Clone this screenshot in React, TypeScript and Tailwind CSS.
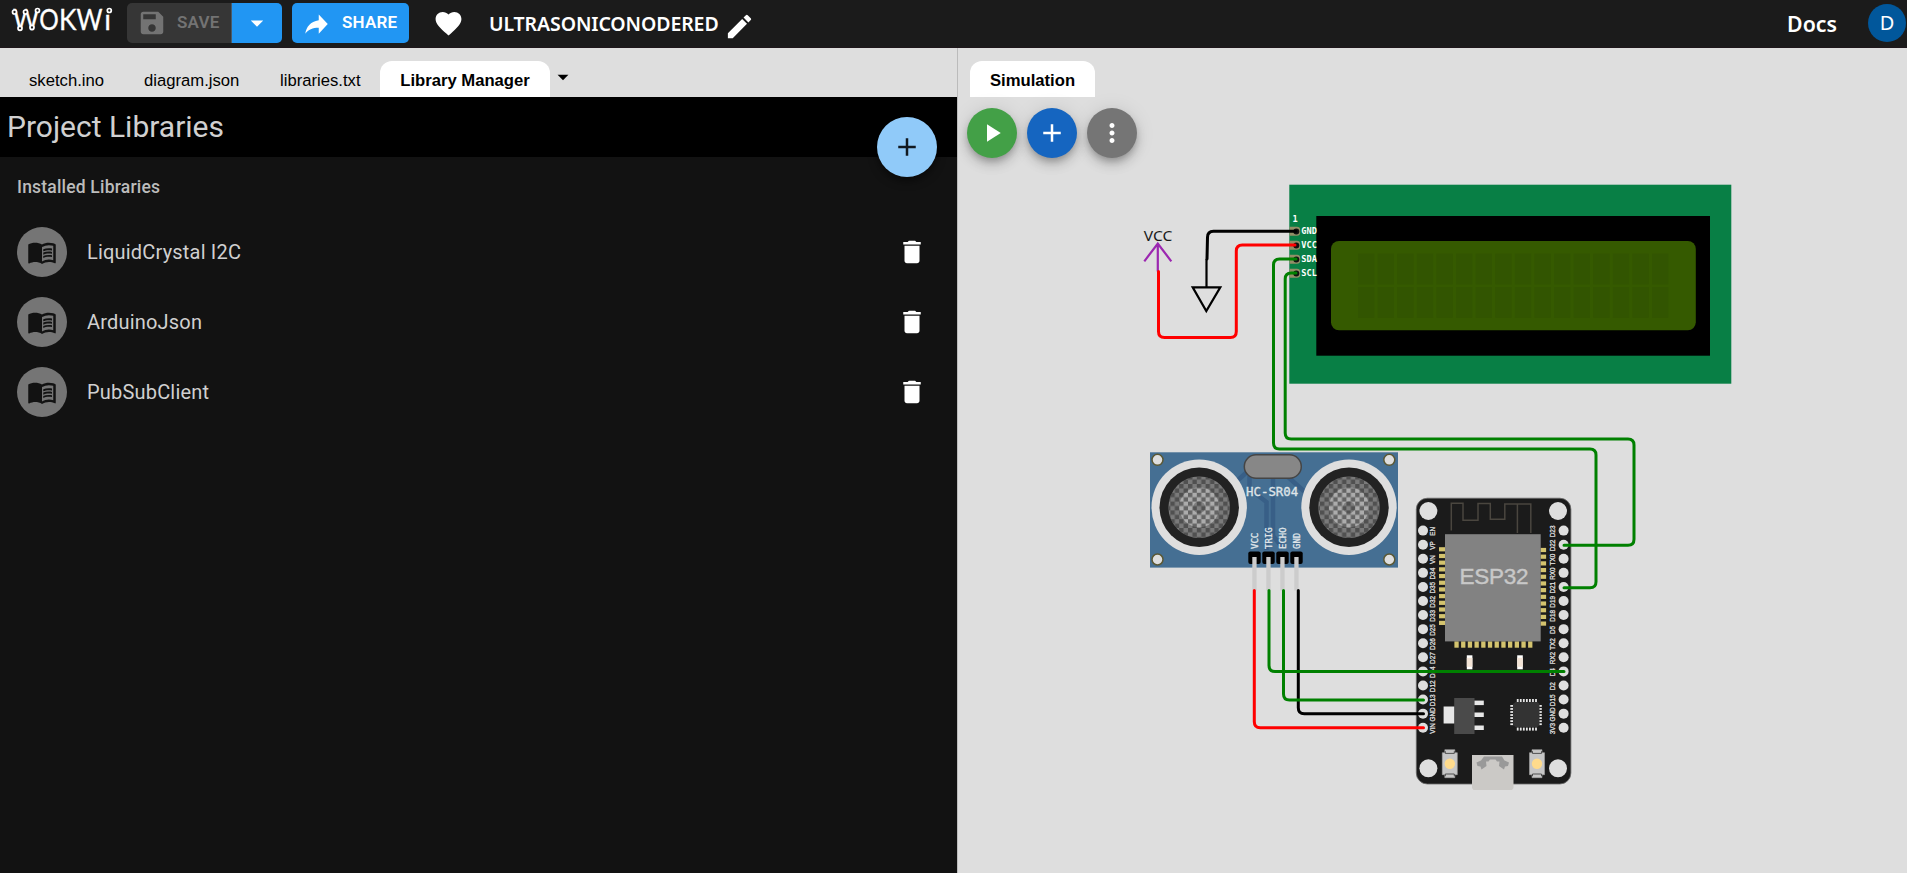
import React from "react";

const ICONS = {
  save: "M17 3H5c-1.11 0-2 .9-2 2v14c0 1.1.89 2 2 2h14c1.1 0 2-.9 2-2V7l-4-4zm-5 16c-1.66 0-3-1.34-3-3s1.34-3 3-3 3 1.34 3 3-1.34 3-3 3zm3-10H5V5h10v4z",
  share: "M14 4v5C6.5 10 3 15 2 21c2.8-3.6 6.5-5.2 12-5.2V21l8-8.5z",
  heart: "M12 21.35l-1.45-1.32C5.4 15.36 2 12.28 2 8.5 2 5.42 4.42 3 7.5 3c1.74 0 3.41.81 4.5 2.09C13.09 3.81 14.76 3 16.5 3 19.58 3 22 5.42 22 8.5c0 3.78-3.4 6.86-8.55 11.54L12 21.35z",
  edit: "M3 17.25V21h3.75L17.81 9.94l-3.75-3.75L3 17.25zM20.71 7.04c.39-.39.39-1.02 0-1.41l-2.34-2.34a.9959.9959 0 0 0-1.41 0l-1.83 1.83 3.75 3.75 1.83-1.83z",
  caret: "M7 10l5 5 5-5z",
  add: "M19 13h-6v6h-2v-6H5v-2h6V5h2v6h6v2z",
  play: "M8 5v14l11-7z",
  more: "M12 8c1.1 0 2-.9 2-2s-.9-2-2-2-2 .9-2 2 .9 2 2 2zm0 2c-1.1 0-2 .9-2 2s.9 2 2 2 2-.9 2-2-.9-2-2-2zm0 6c-1.1 0-2 .9-2 2s.9 2 2 2 2-.9 2-2-.9-2-2-2z",
  trash: "M6 19c0 1.1.9 2 2 2h8c1.1 0 2-.9 2-2V7H6v12zM19 4h-3.5l-1-1h-5l-1 1H5v2h14V4z",
  book: "M21 5c-1.11-.35-2.33-.5-3.5-.5-1.95 0-4.05.4-5.5 1.5-1.45-1.1-3.55-1.5-5.5-1.5S2.45 4.9 1 6v14.65c0 .25.25.5.5.5.1 0 .15-.05.25-.05C3.1 20.45 5.05 20 6.5 20c1.95 0 4.05.4 5.5 1.5 1.35-.85 3.8-1.5 5.5-1.5 1.65 0 3.35.3 4.75 1.05.1.05.15.05.25.05.25 0 .5-.25.5-.5V6c-.6-.45-1.25-.75-2-1zm0 13.5c-1.1-.35-2.3-.5-3.5-.5-1.7 0-4.15.65-5.5 1.5V8c1.35-.85 3.8-1.5 5.5-1.5 1.2 0 2.4.15 3.5.5v11.5z",
  lines:
    "M17.5 10.5c.88 0 1.73.09 2.5.26V9.24c-.79-.15-1.64-.24-2.5-.24-1.7 0-3.24.29-4.5.83v1.66c1.13-.64 2.7-.99 4.5-.99zM13 12.49v1.66c1.13-.64 2.7-.99 4.5-.99.88 0 1.73.09 2.5.26V11.9c-.79-.15-1.64-.24-2.5-.24-1.7 0-3.24.3-4.5.83zM17.5 14.33c-1.7 0-3.24.29-4.5.83v1.66c1.13-.64 2.7-.99 4.5-.99.88 0 1.73.09 2.5.26v-1.52c-.79-.16-1.64-.24-2.5-.24z",
};

function Icon({ d, className }: { d: string; className: string }) {
  return (
    <svg viewBox="0 0 24 24" fill="currentColor" className={`shrink-0 ${className}`}>
      <path d={d} />
    </svg>
  );
}

function Logo() {
  const nodes = [
    [14.5, 13],
    [20, 29.3],
    [25.5, 13],
    [32, 28.5],
    [37.5, 11.5],
    [109.3, 11.5],
  ];
  return (
    <svg viewBox="0 0 120 48" className="h-12 w-[120px] shrink-0">
      <g fill="#fff" stroke="#fff" strokeWidth="0.3" fontFamily="Lato, sans-serif" fontSize="28">
        <text x="13" y="30.7" textLength="26" lengthAdjust="spacingAndGlyphs">W</text>
        <text x="39.3" y="30.7" textLength="19.5" lengthAdjust="spacingAndGlyphs">O</text>
        <text x="59" y="30.7" textLength="17.5" lengthAdjust="spacingAndGlyphs">K</text>
        <text x="76.5" y="30.7" textLength="26" lengthAdjust="spacingAndGlyphs">W</text>
        <text x="104.3" y="30.7">ı</text>
      </g>
      {nodes.map(([x, y]) => (
        <circle key={x} cx={x} cy={y} r="2" fill="#1b1b1b" stroke="#fff" strokeWidth="1.7" />
      ))}
    </svg>
  );
}

function Header() {
  return (
    <header className="flex h-12 shrink-0 items-center border-b border-[#1f171b] bg-[#1b1b1b] pb-px text-white">
      <Logo />
      <div className="ml-[7px] flex h-10 overflow-hidden rounded-[5px] font-[Roboto,sans-serif] text-[17px] font-semibold tracking-[0.2px]">
        <button className="flex w-[104px] items-center bg-[#363636] pl-2.5 text-[#737373]">
          <Icon d={ICONS.save} className="size-[30px]" />
          <span className="ml-[10px]">SAVE</span>
        </button>
        <button className="flex w-[51px] items-center justify-center border-l border-[#4a5a68] bg-[#2196f3]">
          <Icon d={ICONS.caret} className="size-[30px]" />
        </button>
      </div>
      <button className="ml-2.5 flex h-10 w-[117px] items-center rounded-[5px] bg-[#2196f3] pl-[11px] font-[Roboto,sans-serif] text-[17px] font-semibold tracking-[0.2px]">
        <Icon d={ICONS.share} className="size-[27px]" />
        <span className="ml-3">SHARE</span>
      </button>
      <Icon d={ICONS.heart} className="ml-6 size-[31px]" />
      <h1 className="ml-[25px] mt-0.5 w-[235px] whitespace-nowrap font-['Noto_Sans',sans-serif] text-[19.5px] font-semibold tracking-[-0.1px]">
        ULTRASONICONODERED
      </h1>
      <Icon d={ICONS.edit} className="mt-[7px] size-[31px]" />
      <nav className="ml-auto flex items-center gap-[31px] pr-px">
        <a className="mt-px font-['Noto_Sans',sans-serif] text-[21.3px] font-semibold">Docs</a>
        <span className="flex size-[38px] items-center justify-center rounded-full bg-[#01579b] font-['Noto_Sans',sans-serif] text-[20px]">
          D
        </span>
      </nav>
    </header>
  );
}

function LibraryRow({ name }: { name: string }) {
  return (
    <li className="flex h-[70px] items-center pl-[17px] pr-[30px]">
      <span className="flex size-[50px] items-center justify-center rounded-full bg-[#757575] text-[#121212]">
        <svg viewBox="0 0 24 24" fill="currentColor" className="size-[30px]">
          <path d={ICONS.book} />
          <path d={ICONS.lines} />
        </svg>
      </span>
      <span className="ml-5 flex-1 text-[20px] tracking-[0.19px] text-[#d0d0d0]">{name}</span>
      <Icon d={ICONS.trash} className="size-[30px] text-white" />
    </li>
  );
}

function EditorPane() {
  const tab = "flex h-9 items-center whitespace-nowrap pl-5 pt-0.5";
  return (
    <section className="flex w-[957px] shrink-0 flex-col">
      <div className="flex h-[49px] items-end bg-[#dedede] pl-[9px] font-['Liberation_Sans',sans-serif] text-[16.67px] text-black">
        <span className={`${tab} w-[115px]`}>sketch.ino</span>
        <span className={`${tab} w-[136px]`}>diagram.json</span>
        <span className={`${tab} w-[120px]`}>libraries.txt</span>
        <span className="flex h-9 w-[170px] items-center justify-center whitespace-nowrap rounded-t-[12px] bg-white pt-0.5 font-bold">
          Library Manager
        </span>
        <Icon d={ICONS.caret} className="mb-[7px] size-[26px]" />
      </div>
      <div className="relative flex-1 bg-[#121212] font-[Roboto,sans-serif]">
        <h2 className="flex h-[60px] items-center bg-black pb-0.5 pl-[7px] text-[30px] text-[#d0d0d0]">
          Project Libraries
        </h2>
        <button className="absolute right-5 top-5 flex size-[60px] items-center justify-center rounded-full bg-[#90caf9] text-[#101820] shadow-[0_4px_8px_rgba(0,0,0,0.5)]">
          <Icon d={ICONS.add} className="size-[30px]" />
        </button>
        <h3 className="flex h-[60px] items-center pl-[17px] text-[17.5px] font-medium tracking-[0.19px] text-[#bcbcbc]">
          Installed Libraries
        </h3>
        <ul>
          <LibraryRow name="LiquidCrystal I2C" />
          <LibraryRow name="ArduinoJson" />
          <LibraryRow name="PubSubClient" />
        </ul>
      </div>
    </section>
  );
}

const LCD_PINS = ["GND", "VCC", "SDA", "SCL"];
const SONAR_PINS = ["VCC", "TRIG", "ECHO", "GND"];
const LEFT_PINS = ["EN", "VP", "VN", "D34", "D35", "D32", "D33", "D25", "D26", "D27", "D14", "D12", "D13", "GND", "VIN"];
const RIGHT_PINS = ["D23", "D22", "TX0", "RX0", "D21", "D19", "D18", "D5", "TX2", "RX2", "D4", "D2", "D15", "GND", "3V3"];
const range = (n: number) => Array.from({ length: n }, (_, i) => i);

function Lcd() {
  return (
    <g>
      <rect x="1289.3" y="184.7" width="442" height="199" fill="#087f45" />
      <rect x="1316.3" y="216" width="393.7" height="139.7" fill="#000" />
      <rect x="1331" y="241" width="364.8" height="89.3" rx="8" fill="#355a00" />
      {range(16).map((c) =>
        [253.7, 287].map((y) => (
          <rect key={`${c}-${y}`} x={1358 + c * 19.6} y={y} width="16.4" height="30.8" fill="#325501" />
        )),
      )}
      <g fontFamily="'DejaVu Sans Mono', monospace" fontSize="8.6" fontWeight="bold" fill="#fff">
        <text x="1292.5" y="222">1</text>
        {LCD_PINS.map((p, i) => (
          <g key={p}>
            <path
              d={`M1289.5 ${226.8 + i * 14}h7.5a3.2 3.2 0 0 1 3.2 3.2v2.6a3.2 3.2 0 0 1-3.2 3.2h-7.5z`}
              fill="#928f67"
            />
            <circle cx="1296.3" cy={231.4 + i * 14} r="3" fill="#111" />
            <text x="1301.3" y={234.2 + i * 14}>{p}</text>
          </g>
        ))}
      </g>
    </g>
  );
}

function Transducer({ cx }: { cx: number }) {
  return (
    <g>
      <circle cx={cx} cy="507.2" r="47.7" fill="#dedede" />
      <circle cx={cx} cy="507.2" r="39.7" fill="#222" />
      <circle cx={cx} cy="507.2" r="30.8" fill="#7a7a7a" />
      <circle cx={cx} cy="507.2" r="20" fill="#acacac" />
      <circle cx={cx} cy="507.2" r="6" fill="#808080" />
      <circle cx={cx} cy="507.2" r="30.8" fill="url(#mesh)" />
    </g>
  );
}

function Sonar() {
  return (
    <g>
      <rect x="1150" y="452.3" width="248" height="115.3" fill="#456f93" />
      <g fill="none" stroke="#385f87" strokeWidth="4.5">
        <path d="M1249.5 476v13l17 13v48" />
        <path d="M1273 476v60l10 12" />
        <path d="M1287 476l20 18" />
        <path d="M1236 482l12-11" />
      </g>
      {[1157.5, 1389.3].map((x) =>
        [459.8, 559.5].map((y) => (
          <circle key={`${x}-${y}`} cx={x} cy={y} r="5.5" fill="#dedede" stroke="#5b5834" strokeWidth="1.5" />
        )),
      )}
      <Transducer cx={1199.2} />
      <Transducer cx={1349} />
      <rect x="1244.3" y="454.7" width="57" height="23.6" rx="11.8" fill="#878787" stroke="#454545" strokeWidth="1.5" />
      <g fontFamily="'DejaVu Sans Mono', monospace" fill="#dfe4e8" stroke="#dfe4e8" strokeWidth="0.35">
        <text x="1246" y="496.3" fontSize="12.4">HC-SR04</text>
        {SONAR_PINS.map((p, i) => (
          <g key={p}>
            <text fontSize="9" transform={`translate(${1257.8 + i * 14} 549) rotate(-90)`}>{p}</text>
            <rect x={1248.3 + i * 14} y="551.5" width="12.4" height="12.5" rx="2" fill="#000" stroke="none" />
            <rect x={1252.3 + i * 14} y="557" width="4.3" height="33.5" fill="#ccc" stroke="none" />
          </g>
        ))}
      </g>
    </g>
  );
}

function PushButton({ x, y }: { x: number; y: number }) {
  return (
    <g>
      <path
        d={`M${x - 5} ${y - 14}h10v3h2.5v22h-2.5v3h-10v-3h-2.5v-22h2.5z`}
        fill="#c6c6c6"
        stroke="#a5a5a5"
        strokeWidth="0.6"
      />
      <path
        d={`M${x - 4.5} ${y - 12.5}v2.2h9v-2.2M${x - 4.5} ${y + 12.5}v-2.2h9v2.2`}
        fill="none"
        stroke="#333"
        strokeWidth="0.8"
      />
      <circle cx={x} cy={y} r="5.2" fill="#ffdb8c" />
    </g>
  );
}

function Esp32() {
  return (
    <g>
      <rect x="1416.3" y="498.2" width="154.6" height="285.8" rx="11" fill="#1b1b1b" stroke="#6b6b6b" strokeWidth="0.8" />
      {[1428.4, 1558].map((x) => [511, 768.3].map((y) => <circle key={`${x}-${y}`} cx={x} cy={y} r="9" fill="#dedede" />))}
      <path
        d="M1451.3 530.5V503.3H1463V520.3H1478V503.6H1490.3V519.3H1504.8V504H1530.8V533M1517.4 504V533"
        fill="none"
        stroke="#4a463f"
        strokeWidth="1.5"
      />
      <g fill="#d3c36e">
        {range(12).map((i) => (
          <g key={i}>
            <rect x="1439" y={547.2 + i * 6.69} width="6.2" height="4.2" />
            <rect x="1540.5" y={547.9 + i * 6.69} width="5.6" height="4.2" />
            <rect x={1454.4 + i * 6.7} y="641.3" width="4.3" height="6.4" />
          </g>
        ))}
      </g>
      <rect x="1445" y="534.2" width="95.7" height="107.2" fill="#828282" />
      <text
        x="1459.5"
        y="584.3"
        textLength="69"
        fontFamily="'Liberation Sans', Arial, sans-serif"
        fontSize="22.5"
        fill="#c8c8c8"
        stroke="#c8c8c8"
        strokeWidth="0.4"
      >
        ESP32
      </text>
      <g
        fontFamily="'Liberation Sans', Arial, sans-serif"
        fontSize="6.4"
        fill="#dcdcdc"
        stroke="#dcdcdc"
        strokeWidth="0.3"
        textAnchor="middle"
      >
        {range(15).map((i) => {
          const y = 530.6 + i * 14.08;
          return (
            <g key={i}>
              <circle cx="1423" cy={y} r="5" fill="#dedede" stroke="none" />
              <circle cx="1563.6" cy={y} r="5" fill="#dedede" stroke="none" />
              <text transform={`translate(1434.8 ${y + 0.8}) rotate(-90)`}>{LEFT_PINS[i]}</text>
              <text transform={`translate(1555.4 ${y + 0.8}) rotate(-90)`}>{RIGHT_PINS[i]}</text>
            </g>
          );
        })}
      </g>
      {[1466.8, 1517.2].map((x) => (
        <g key={x}>
          <rect x={x} y="655.3" width="5.6" height="14" fill="#fff" />
          <rect x={x} y="657.8" width="5.6" height="9" fill="#f3e4d6" />
        </g>
      ))}
      <rect x="1454.2" y="698" width="20.3" height="36" fill="#4a4a4a" />
      <g fill="#e6e6e6">
        <rect x="1443.6" y="706.5" width="10.6" height="17" />
        <rect x="1474.5" y="700.6" width="9.3" height="4.5" />
        <rect x="1474.5" y="712.5" width="9.3" height="4.5" />
        <rect x="1474.5" y="725.5" width="9.3" height="4.5" />
        {range(7).map((i) => (
          <g key={i}>
            <rect x={1516.8 + i * 3.05} y="699" width="1.8" height="3" />
            <rect x={1516.8 + i * 3.05} y="727.6" width="1.8" height="3" />
            <rect x="1510.3" y={705 + i * 3.05} width="3" height="1.8" />
            <rect x="1538.8" y={705 + i * 3.05} width="3" height="1.8" />
          </g>
        ))}
      </g>
      <path d="M1515.5 702h22l2 2v21l-2 2h-22l-2.5-2v-21z" fill="#333" />
      <PushButton x={1449.8} y={763.7} />
      <PushButton x={1537} y={763.7} />
      <path d="M1472 755h41.5v33l-1.5 2h-38.5l-1.5-2z" fill="#cbc9c6" />
      <path
        d="M1484 756.500h18l2.500 4 4.500 2-1 3.500-3 0.500-1 3-5-3.500 0.500-4.500h-2.500l-1.500-2h-5.500l-1.500 2h-2.500l0.500 4.500-5 3.500-1-3-3-0.500-1-3.500 4.500-2z"
        fill="#999"
      />
    </g>
  );
}

function Diagram() {
  return (
    <svg viewBox="958 48 949 825" className="absolute inset-0 h-[825px] w-[949px]">
      <defs>
        <pattern id="mesh" width="8.8" height="8.8" patternUnits="userSpaceOnUse">
          <rect width="4.4" height="4.4" fill="#333" fillOpacity="0.6" />
          <rect x="4.4" y="4.4" width="4.4" height="4.4" fill="#333" fillOpacity="0.6" />
        </pattern>
      </defs>
      <Lcd />
      <Sonar />
      <Esp32 />
      <text
        x="1143.7"
        y="240.6"
        textLength="28.6"
        lengthAdjust="spacingAndGlyphs"
        fontFamily="'Noto Sans', sans-serif"
        fontSize="14.8"
        fill="#1a1a1a"
      >
        VCC
      </text>
      <path d="M1157.8 271.5V243.5M1144.3 261.3L1157.8 243.5L1171.3 261.3" fill="none" stroke="#9c27b0" strokeWidth="2.2" />
      <path d="M1206.5 259V287.3M1192.7 287.3H1220.3L1206.3 311Z" fill="none" stroke="#000" strokeWidth="2.2" />
      <g fill="none" strokeWidth="3" strokeLinecap="round">
        <g stroke="#000">
          <path d="M1207 259L1207.5 237.3Q1207.5 231.2 1213.5 231.2H1296" />
          <path d="M1298.3 590.5V707.7Q1298.3 713.8 1304.3 713.8H1423.5" />
        </g>
        <g stroke="#f00">
          <path d="M1158.5 271.5V331.5Q1158.5 337.5 1164.5 337.5H1230.3Q1236.3 337.5 1236.3 331.5V251Q1236.3 245 1242.3 245H1295" />
          <path d="M1254.3 590.5V721.8Q1254.3 727.8 1260.3 727.8H1423.5" />
        </g>
        <g stroke="#008000">
          <path d="M1296 259H1279.5Q1273.5 259 1273.5 265V443Q1273.5 449 1279.5 449H1590Q1596 449 1596 455V581.7Q1596 587.7 1590 587.7H1564" />
          <path d="M1296 273H1291.2Q1285.2 273 1285.2 279V433Q1285.2 439 1291.2 439H1628Q1634 439 1634 445V539.2Q1634 545.2 1628 545.2H1564" />
          <path d="M1269 590.5V665.6Q1269 671.6 1275 671.6H1564" />
          <path d="M1283.5 590.5V694Q1283.5 700 1289.5 700H1423.5" />
        </g>
      </g>
    </svg>
  );
}

function SimulationPane() {
  const fab =
    "flex size-[50px] items-center justify-center rounded-full text-white shadow-[0_4px_6px_-1px_rgba(0,0,0,0.2),0_7px_12px_rgba(0,0,0,0.14),0_1px_20px_rgba(0,0,0,0.1)]";
  return (
    <section className="relative flex flex-1 flex-col overflow-hidden border-l border-[#bbb] bg-[#dedede]">
      <Diagram />
      <div className="flex h-[49px] items-end pl-3">
        <span className="flex h-9 w-[125px] items-center justify-center rounded-t-[12px] bg-white pt-0.5 font-['Liberation_Sans',sans-serif] text-[16.67px] font-bold text-black">
          Simulation
        </span>
      </div>
      <div className="relative mt-[11px] flex gap-2.5 pl-[9px]">
        <button className={`${fab} bg-[#43a047]`}>
          <Icon d={ICONS.play} className="size-[30px]" />
        </button>
        <button className={`${fab} bg-[#1565c0]`}>
          <Icon d={ICONS.add} className="size-[30px]" />
        </button>
        <button className={`${fab} bg-[#757575]`}>
          <Icon d={ICONS.more} className="size-[30px]" />
        </button>
      </div>
    </section>
  );
}

export default function App() {
  return (
    <div className="flex h-screen w-screen flex-col overflow-hidden bg-[#dedede]">
      <Header />
      <main className="flex min-h-0 flex-1">
        <EditorPane />
        <SimulationPane />
      </main>
    </div>
  );
}
